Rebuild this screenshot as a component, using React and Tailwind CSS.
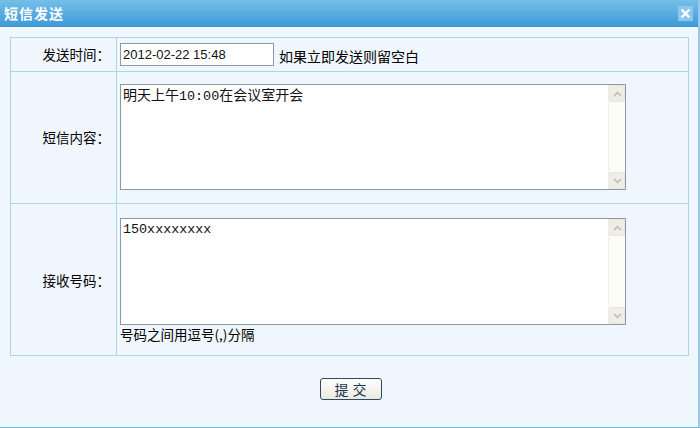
import React from "react";

const cjk = { fontFamily: '"Noto Sans CJK SC", "Liberation Sans", sans-serif' };
const mono = { fontFamily: '"Liberation Mono", "Noto Sans CJK SC", monospace' };

function Chevron({ up }) {
  return (
    <svg width="9" height="6" viewBox="0 0 9 6">
      <path
        d={up ? "M1 5 L4.5 1.5 L8 5" : "M1 1 L4.5 4.5 L8 1"}
        fill="none"
        stroke="#c4c4bc"
        strokeWidth="1.8"
      />
    </svg>
  );
}

function FakeTextarea({ children, h }) {
  return (
    <div className={`flex w-[506px] border border-[#8e9aa3] bg-white ${h}`}>
      <div
        className="flex-1 px-[2px] pt-[3px] text-[13.4px] leading-[16px] text-[#111]"
        style={mono}
      >
        {children}
      </div>
      <div className="flex w-[17px] flex-col justify-between bg-[#fcfcf7] border-l border-[#f0efe8]">
        <div className="flex h-[17px] items-center justify-center rounded-[2px] border border-[#e8e7de] bg-[#efeee6]">
          <Chevron up />
        </div>
        <div className="flex h-[17px] items-center justify-center rounded-[2px] border border-[#e8e7de] bg-[#efeee6]">
          <Chevron />
        </div>
      </div>
    </div>
  );
}

export default function App() {
  return (
    <div
      className="flex h-[428px] w-[700px] flex-col border-r-2 border-b border-r-[#9cc9e6] border-b-[#5cc0d8] bg-[#f0f6fd] text-[13px] text-black"
      style={cjk}
    >
      <div className="flex h-[27px] items-center justify-between border-b border-[#4b94c4] bg-gradient-to-b from-[#75bfe9] to-[#3d9bd7] pl-[4px] pr-[5px]">
        <span className="text-[14px] font-bold tracking-[1px] text-white">短信发送</span>
        <div className="flex h-[15px] w-[15px] items-center justify-center bg-[#8cc6ea]">
          <svg width="11" height="11" viewBox="0 0 11 11">
            <path d="M1.5 1.5 L9.5 9.5 M9.5 1.5 L1.5 9.5" stroke="white" strokeWidth="2.4" />
          </svg>
        </div>
      </div>

      <div className="ml-[10px] mt-[10px] w-[679px] border border-[#aad6e6]">
        {/* row 1 */}
        <div className="flex h-[34px] border-b border-[#aad6e6]">
          <div className="flex w-[106px] items-center justify-end border-r border-[#aad6e6] pr-[6px] text-[13.5px]">
            发送时间：
          </div>
          <div className="flex items-center pl-[3px]">
            <div
              className="flex h-[23px] w-[154px] items-center border border-[#8e9aa3] bg-white px-[2px] text-[13px] text-[#111]"
              style={{ fontFamily: '"Liberation Sans", Arial, sans-serif' }}
            >
              2012-02-22 15:48
            </div>
            <span className="ml-[5px] mt-[3px] text-[14px]">如果立即发送则留空白</span>
          </div>
        </div>
        {/* row 2 */}
        <div className="flex h-[132px] border-b border-[#aad6e6]">
          <div className="flex w-[106px] items-center justify-end border-r border-[#aad6e6] pr-[6px] text-[13.5px]">
            短信内容：
          </div>
          <div className="pl-[3px] pt-[12px]">
            <FakeTextarea h="h-[106px]">
              <span className="text-[14px]">明天上午</span>10:00<span className="text-[14px]">在会议室开会</span>
            </FakeTextarea>
          </div>
        </div>
        {/* row 3 */}
        <div className="flex h-[151px]">
          <div className="flex w-[106px] items-center justify-end border-r border-[#aad6e6] pr-[6px] pt-[2px] text-[13.5px]">
            接收号码：
          </div>
          <div className="pl-[3px] pt-[14px]">
            <FakeTextarea h="h-[107px]">150xxxxxxxx</FakeTextarea>
            <div className="mt-[1px] text-[13.5px] leading-[16px]">号码之间用逗号(,)分隔</div>
          </div>
        </div>
      </div>

      <div className="mt-[22px] flex justify-center pl-[3px]">
        <button className="flex h-[22px] w-[62px] items-center justify-center rounded-[3px] border border-[#2a4a68] bg-gradient-to-b from-white to-[#ebe9df] pl-[4px] text-[14px] tracking-[4px] text-[#1c3552]">
          提交
        </button>
      </div>
    </div>
  );
}
